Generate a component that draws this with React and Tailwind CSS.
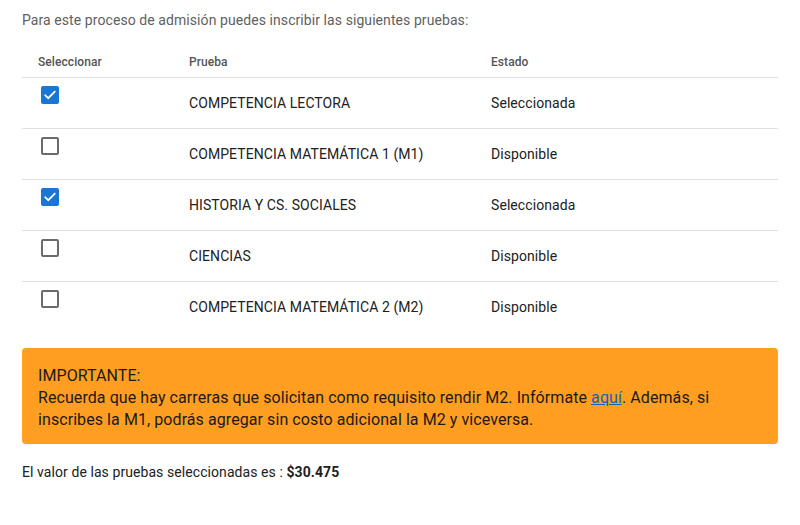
import React from "react";

const rows = [
  { name: "COMPETENCIA LECTORA", checked: true },
  { name: "COMPETENCIA MATEMÁTICA 1 (M1)", checked: false },
  { name: "HISTORIA Y CS. SOCIALES", checked: true },
  { name: "CIENCIAS", checked: false },
  { name: "COMPETENCIA MATEMÁTICA 2 (M2)", checked: false },
];

function Box({ checked }) {
  if (checked) {
    return (
      <span className="flex h-[18px] w-[18px] items-center justify-center rounded-[2px] bg-[#1976d2]">
        <svg width="14" height="14" viewBox="0 0 24 24" fill="none" stroke="white" strokeWidth="3" strokeLinecap="square">
          <path d="M4 12.5l5 5L20 6.5" />
        </svg>
      </span>
    );
  }
  return <span className="block h-[18px] w-[18px] rounded-[2px] border-2 border-[#6b6b6b]" />;
}

export default function App() {
  return (
    <div className="w-[800px] bg-white px-[22px] pt-[10px] pb-10 text-[#212121] tracking-[0.075px]" style={{ fontFamily: "Roboto, 'Liberation Sans', sans-serif" }}>
      <p className="text-[14px] leading-5 text-[#5f5f5f]">
        Para este proceso de admisión puedes inscribir las siguientes pruebas:
      </p>
      <div className="mt-4">
        <div className="grid h-[32px] grid-cols-[151px_302px_1fr] items-center border-b border-[#e0e0e0] text-[12px] font-medium text-[#555]">
          <div className="pl-4">Seleccionar</div>
          <div className="pl-4">Prueba</div>
          <div className="pl-4">Estado</div>
        </div>
        {rows.map((r, i) => (
          <div
            key={r.name}
            className={`grid h-[51px] grid-cols-[151px_302px_1fr] text-[14px] ${i < rows.length - 1 ? "border-b border-[#e0e0e0]" : ""}`}
          >
            <div className="pl-[19px] pt-[8px]">
              <Box checked={r.checked} />
            </div>
            <div className="flex items-center pl-4">{r.name}</div>
            <div className="flex items-center pl-4">{r.checked ? "Seleccionada" : "Disponible"}</div>
          </div>
        ))}
      </div>
      <div className="mt-[15px] rounded-[4px] bg-[#ff9e21] px-4 pt-[17px] pb-[13px] pr-10 text-[16px] leading-[22px] text-[#1a1a1a]">
        <div>IMPORTANTE:</div>
        <div>
          Recuerda que hay carreras que solicitan como requisito rendir M2. Infórmate{" "}
          <a href="#" className="text-[#1466b8] underline">aquí</a>. Además, si inscribes la M1, podrás agregar sin costo adicional la M2 y viceversa.
        </div>
      </div>
      <p className="mt-[18px] text-[14px] leading-5 text-[#212121]">
        El valor de las pruebas seleccionadas es : <span className="font-bold">$30.475</span>
      </p>
    </div>
  );
}
